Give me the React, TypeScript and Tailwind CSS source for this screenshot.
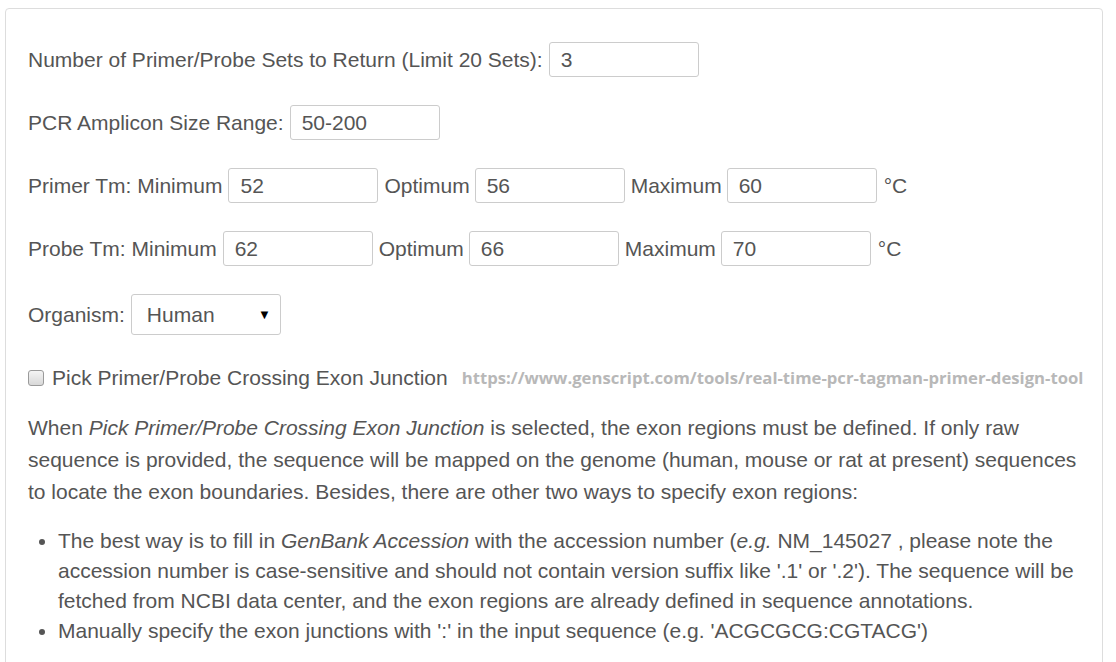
import React from "react";

const inputCls =
  "h-[35px] w-[150px] rounded-[3px] border border-[#cccccc] bg-white px-[11px] text-[21px] text-[#555555] outline-none";

const Field = ({ value }: { value: string }) => (
  <input className={inputCls} defaultValue={value} />
);

const TmRow = ({
  label,
  min,
  opt,
  max,
}: {
  label: string;
  min: string;
  opt: string;
  max: string;
}) => (
  <div className="flex h-[35px] items-center">
    <span>{label}</span>
    <span className="ml-[6px]">
      <Field value={min} />
    </span>
    <span className="ml-[6px]">Optimum</span>
    <span className="ml-[5px]">
      <Field value={opt} />
    </span>
    <span className="ml-[6px]">Maximum</span>
    <span className="ml-[5px]">
      <Field value={max} />
    </span>
    <span className="ml-[7px]">°C</span>
  </div>
);

export default function App() {
  return (
    <div
      className="min-h-[662px] bg-white pl-[5px] pt-[8px] text-[21px] text-[#555555]"
      style={{ fontFamily: '"Liberation Sans", Arial, sans-serif' }}
    >
      <div className="h-[700px] w-[1098px] rounded-[4px] border border-[#dddddd] pl-[22px] pt-[33px]">
        <div className="flex flex-col gap-[28px]">
          <div className="flex h-[35px] items-center">
            <span>Number of Primer/Probe Sets to Return (Limit 20 Sets):</span>
            <span className="ml-[6px]">
              <Field value="3" />
            </span>
          </div>
          <div className="flex h-[35px] items-center">
            <span>PCR Amplicon Size Range:</span>
            <span className="ml-[6px]">
              <Field value="50-200" />
            </span>
          </div>
          <TmRow label="Primer Tm: Minimum" min="52" opt="56" max="60" />
          <TmRow label="Probe Tm: Minimum" min="62" opt="66" max="70" />
          <div className="flex h-[41px] items-center">
            <span>Organism:</span>
            <div className="ml-[6px] flex h-[41px] w-[150px] items-center justify-between rounded-[3px] border border-[#cccccc] pl-[15px] pr-[9px]">
              <span>Human</span>
              <span className="text-[13px] text-black">▼</span>
            </div>
          </div>
        </div>

        <div className="mt-[32px] flex h-[22px] items-center">
          <span className="h-[16px] w-[16px] rounded-[3px] border border-[#9a9a9a] bg-gradient-to-b from-[#f4f4f4] to-[#d8d8d8]" />
          <span className="ml-[8px]">Pick Primer/Probe Crossing Exon Junction</span>
          <span
            className="ml-[14px] text-[16.7px] font-bold text-[#b8b8b8]"
            style={{ fontFamily: '"Open Sans", sans-serif' }}
          >
            https://www.genscript.com/tools/real-time-pcr-tagman-primer-design-tool
          </span>
        </div>

        <p className="mt-[23px] w-[1050px] leading-[32px]">
          When <em>Pick Primer/Probe Crossing Exon Junction</em> is selected, the exon
          regions must be defined. If only raw sequence is provided, the sequence will be
          mapped on the genome (human, mouse or rat at present) sequences to locate the
          exon boundaries. Besides, there are other two ways to specify exon regions:
        </p>

        <ul className="mt-[18px] w-[1050px] list-disc pl-[30px] leading-[30px]">
          <li>
            The best way is to fill in <em>GenBank Accession</em> with the accession number
            (<em>e.g.</em> NM_145027 , please note the accession number is case-sensitive
            and should not contain version suffix like '.1' or '.2'). The sequence will be
            fetched from NCBI data center, and the exon regions are already defined in
            sequence annotations.
          </li>
          <li>
            Manually specify the exon junctions with ':' in the input sequence (e.g.
            'ACGCGCG:CGTACG')
          </li>
        </ul>
      </div>
    </div>
  );
}
